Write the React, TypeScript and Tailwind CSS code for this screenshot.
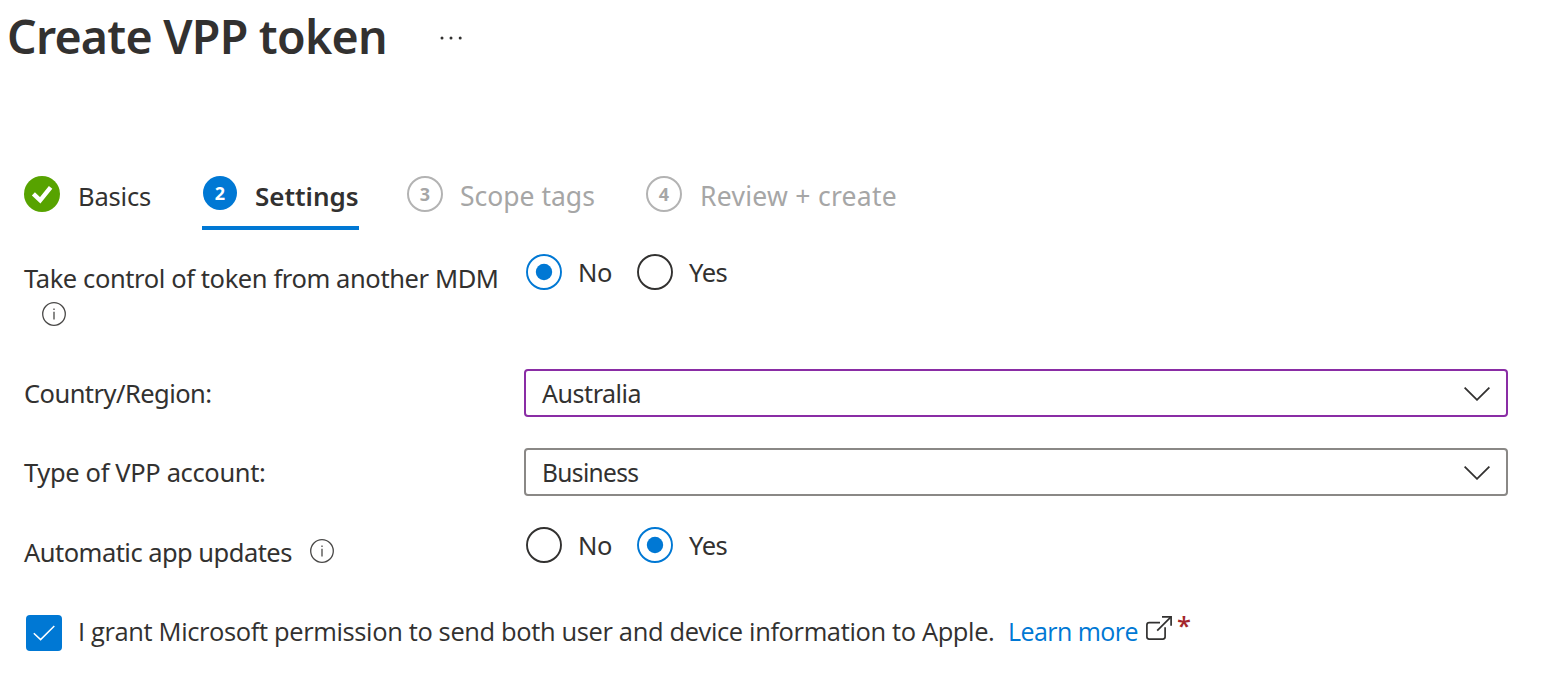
import type { ReactNode } from "react";

function InfoIcon({ className = "" }: { className?: string }) {
  return (
    <svg viewBox="0 0 24 24" className={`size-6 shrink-0 ${className}`} fill="none" stroke="#4a4948">
      <circle cx="12" cy="12" r="11.3" strokeWidth="1.3" />
      <path d="M12 9.8V17.5" strokeWidth="1.3" />
      <path d="M12 6.6V8.1" strokeWidth="1.3" />
    </svg>
  );
}

function Radio({ checked, label, className, labelClass }: { checked: boolean; label: string; className: string; labelClass: string }) {
  return (
    <label className={`flex h-9 items-center ${className}`}>
      <svg viewBox="0 0 36 36" className="size-9 shrink-0" fill="none">
        <circle cx="18" cy="18" r="17" strokeWidth="1.9" stroke={checked ? "#0078d4" : "#323130"} />
        {checked && <circle cx="18" cy="18" r="8.2" fill="#0078d4" />}
      </svg>
      <span className={`leading-[34px] ${labelClass}`}>{label}</span>
    </label>
  );
}

function Select({ value, className, textClass }: { value: string; className: string; textClass: string }) {
  return (
    <div className={`flex h-12 w-[984px] items-center justify-between rounded-[4px] border-2 pr-4 pl-4 ${className}`}>
      <span className={`leading-[34px] ${textClass}`}>{value}</span>
      <svg viewBox="0 0 26 14" className="mt-0.5 h-3.5 w-[26px]" fill="none" stroke="#323130" strokeWidth="1.8">
        <path d="M0.6 0.6L13 12.8L25.4 0.6" />
      </svg>
    </div>
  );
}

function Row({ label, className, labelClass, children }: { label: ReactNode; className: string; labelClass: string; children: ReactNode }) {
  return (
    <div className={`grid grid-cols-[500px_1fr] items-start ${className}`}>
      <div className={`leading-[34px] whitespace-nowrap ${labelClass}`}>{label}</div>
      <div className="flex">{children}</div>
    </div>
  );
}

function StepNumber({ n }: { n: number }) {
  return (
    <span className="flex size-9 items-center justify-center rounded-full border-2 border-[#b3b3b3] pb-px text-[18px] leading-none font-bold">
      {n}
    </span>
  );
}

export default function App() {
  return (
    <main className="h-[682px] w-[1564px] overflow-hidden bg-white font-['Noto_Sans','Open_Sans',sans-serif] text-[25.5px] text-[#323130]">
      <header className="flex h-[173px] items-start pt-[6px] pl-[7px]">
        <h1 className="w-[433px] text-[46.5px] leading-[60px] font-semibold tracking-[-0.75px] whitespace-nowrap">Create VPP token</h1>
        <svg viewBox="0 0 24 4" className="mt-[30px] h-1 w-6" fill="#323130">
          <circle cx="2" cy="2" r="1.5" />
          <circle cx="11" cy="2" r="1.5" />
          <circle cx="20.2" cy="2" r="1.5" />
        </svg>
      </header>

      <nav className="flex h-[57px] items-start pl-6 leading-[34px] whitespace-nowrap">
        <div className="flex w-[178px] pt-[3px]">
          <svg viewBox="0 0 36 36" className="mr-[18px] size-9">
            <circle cx="18" cy="18" r="18" fill="#57a300" />
            <path d="M9.4 17.8L16.2 24.3L26.6 11.3" fill="none" stroke="#fff" strokeWidth="4.4" />
          </svg>
          <span className="pt-[3px] tracking-[-0.18px]">Basics</span>
        </div>
        <div className="flex h-[57px] w-[157px] border-b-4 border-[#0078d4] pt-[3px]">
          <span className="mr-[18px] ml-[1px] flex size-[34px] shrink-0 items-center justify-center rounded-full bg-[#0078d4] text-[18px] leading-none font-bold text-white">
            2
          </span>
          <span className="pt-[3px] text-[26px] font-semibold">Settings</span>
        </div>
        <div className="ml-12 flex w-[239px] pt-[3px] text-[#a6a6a6]">
          <StepNumber n={3} />
          <span className="pt-[3px] pl-[17px] text-[26.5px]">Scope tags</span>
        </div>
        <div className="flex pt-[3px] text-[#a6a6a6]">
          <StepNumber n={4} />
          <span className="pt-[3px] pl-[18px] text-[26.5px] tracking-[0.28px]">Review + create</span>
        </div>
      </nav>

      <form className="pt-6 pl-6">
        <Row
          className="h-[115px]"
          labelClass="pt-[7px] tracking-[-0.4px]"
          label={
            <>
              <div>Take control of token from another MDM</div>
              <InfoIcon className="mt-[7px] ml-[18px]" />
            </>
          }
        >
          <Radio checked label="No" className="ml-[2px] w-[111px]" labelClass="pl-4 tracking-[-0.4px]" />
          <Radio checked={false} label="Yes" className="" labelClass="pl-4 tracking-[-0.5px]" />
        </Row>
        <Row className="h-[79px]" labelClass="pt-[7px] tracking-[-0.55px]" label="Country/Region:">
          <Select value="Australia" className="border-[#8a2da5]" textClass="text-[25px] tracking-[-0.45px]" />
        </Row>
        <Row className="h-[79px]" labelClass="pt-[7px] tracking-[-0.36px]" label="Type of VPP account:">
          <Select value="Business" className="border-[#8a8886]" textClass="pt-0.5 text-[24.5px] tracking-[-0.64px]" />
        </Row>
        <Row
          className="h-[88px]"
          labelClass="pt-2 tracking-[-0.53px]"
          label={
            <div className="flex items-center">
              <span className="w-[286px]">Automatic app updates</span>
              <InfoIcon className="-mt-0.5" />
            </div>
          }
        >
          <Radio checked={false} label="No" className="ml-[2px] w-[111px]" labelClass="pl-4 tracking-[-0.4px]" />
          <Radio checked label="Yes" className="" labelClass="pl-4 tracking-[-0.5px]" />
        </Row>
        <div className="flex items-start pl-[2px] font-['Open_Sans',sans-serif] leading-[34px] whitespace-nowrap">
          <span className="flex size-9 items-center justify-center rounded-[4px] bg-[#0078d4]">
            <svg viewBox="0 0 22 16" className="h-4 w-[22px]" fill="none" stroke="#fff" strokeWidth="1.5">
              <path d="M0.8 8.2L7.6 14.6L21.3 1" />
            </svg>
          </span>
          <span className="-mt-px ml-4 w-[930px] tracking-[-0.37px]">
            I grant Microsoft permission to send both user and device information to Apple.
          </span>
          <a className="-mt-px w-[138px] text-[25px] tracking-[-0.55px] text-[#0078d4]">Learn more</a>
          <svg viewBox="0 0 26 26" className="size-[26px]" fill="none" stroke="#323130" strokeWidth="1.7">
            <path d="M14 7.6H3.2Q0.9 7.6 0.9 9.9V21.8Q0.9 24.1 3.2 24.1H16.8Q19.1 24.1 19.1 21.8V12.2" />
            <path d="M11.2 15.6L25 1.8" />
            <path d="M16 1.8H25.1V10.8" />
          </svg>
          <span className="-mt-[7px] ml-[5px] font-semibold text-[#a4262c]">*</span>
        </div>
      </form>
    </main>
  );
}
